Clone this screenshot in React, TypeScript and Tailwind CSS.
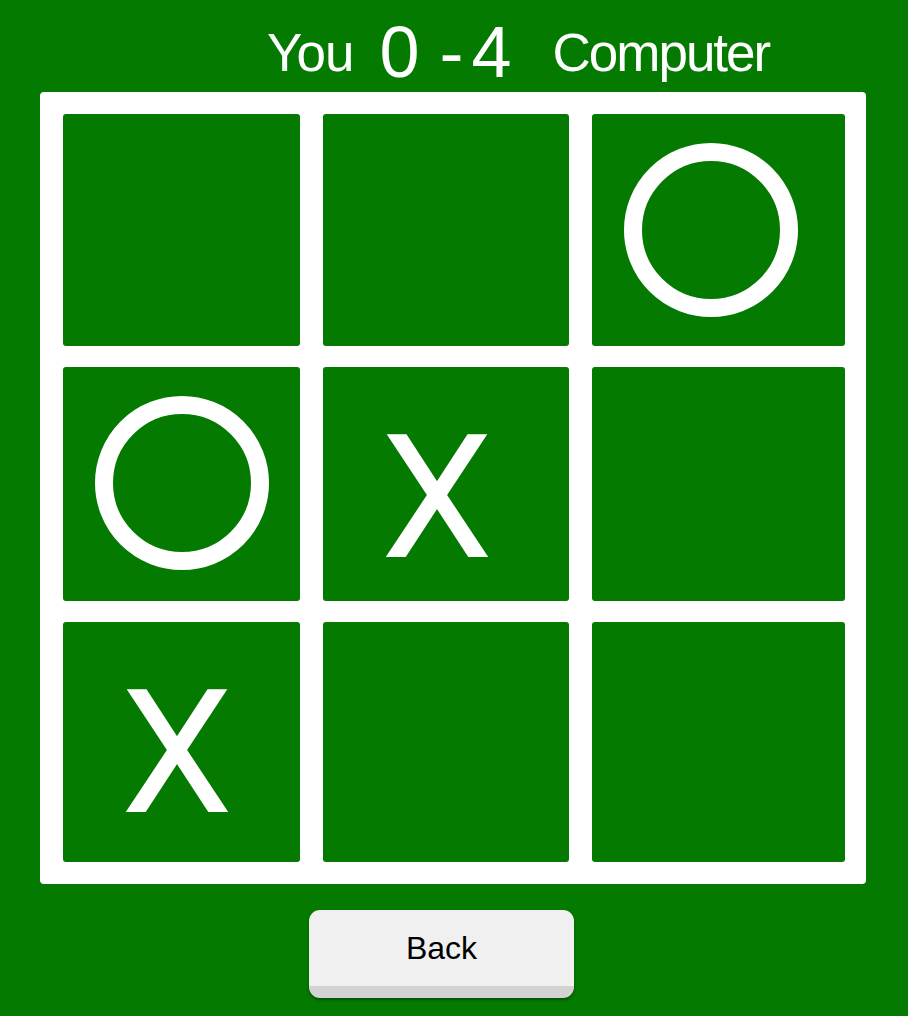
const board: ('X' | 'O' | '')[] = ['', '', 'O', 'O', 'X', '', 'X', '', ''];

function Mark({ value }: { value: 'X' | 'O' | '' }) {
  if (value === 'O') {
    return <div className="w-[174px] h-[174px] rounded-full border-[18px] border-white" />;
  }
  if (value === 'X') {
    return (
      <span className="font-['Roboto',sans-serif] text-[172px] leading-none text-white -translate-x-[5px] translate-y-[15px] scale-x-[1.04]">
        X
      </span>
    );
  }
  return null;
}

export default function App() {
  return (
    <div className="min-h-screen bg-[#057a00] font-['Liberation_Sans',Arial,sans-serif] overflow-hidden">
      <div className="h-[92px] flex items-start text-white">
        <span className="ml-[267px] mt-[26px] text-[53px] leading-none tracking-[-1px]">You</span>
        <span className="ml-[26px] mt-[16px] text-[72px] leading-none">0</span>
        <span className="ml-[20px] mt-[16px] text-[72px] leading-none">-</span>
        <span className="ml-[8px] mt-[16px] text-[72px] leading-none">4</span>
        <span className="ml-[41px] mt-[26px] text-[53px] leading-none tracking-[-2px]">Computer</span>
      </div>

      <div className="ml-[40px] w-[826px] h-[792px] bg-white rounded-[4px] pt-[22px] pl-[23px]">
        <div className="grid grid-cols-[237px_246px_253px] grid-rows-[232px_234px_240px] gap-x-[23px] gap-y-[21px]">
          {board.map((cell, i) => (
            <div key={i} className="bg-[#057a00] rounded-[3px]">
              <div className="w-[237px] h-[232px] flex items-center justify-center">
                <Mark value={cell} />
              </div>
            </div>
          ))}
        </div>
      </div>

      <div className="mt-[26px] ml-[309px]">
        <button className="w-[265px] h-[88px] rounded-[11px] bg-[#f0f0f0] border-b-[12px] border-[#d3d3d3] shadow-[0_2px_3px_rgba(0,0,0,0.35)] text-[32px] text-black">
          Back
        </button>
      </div>
    </div>
  );
}
